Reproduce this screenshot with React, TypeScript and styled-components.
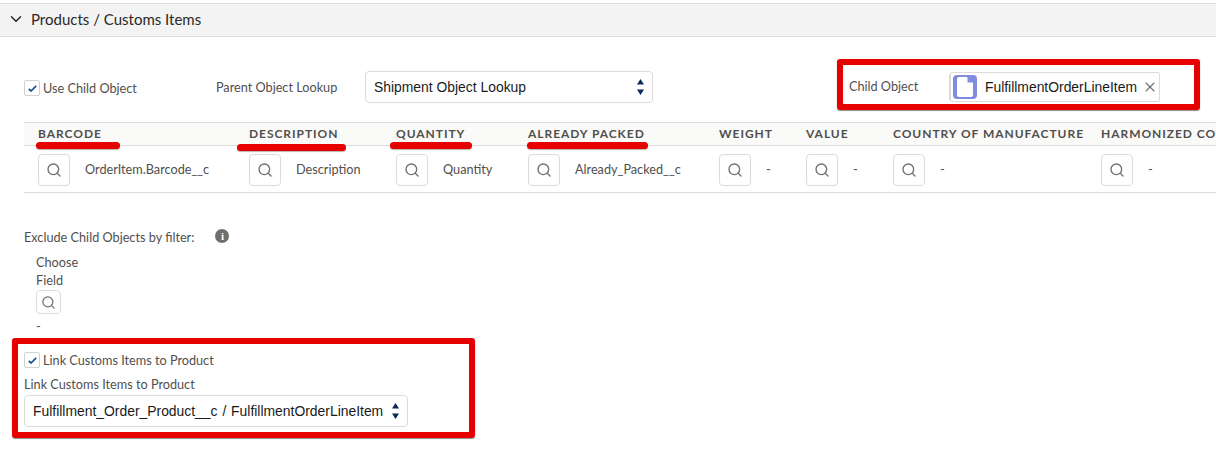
import { memo } from 'react';
import styled, { createGlobalStyle } from 'styled-components';
import { ChevronDown, Search, X } from 'lucide-react';

const GlobalStyle = createGlobalStyle`
  html, body { margin: 0; padding: 0; background: #fff; }
  body { font-family: "Lato", "Liberation Sans", sans-serif; color: #3e3e3c; font-size: 12px; }
`;

const columns = [
  { title: 'Barcode', value: 'OrderItem.Barcode__c', mark: { left: -2, width: 84, top: 19 } },
  { title: 'Description', value: 'Description', mark: { left: -12, width: 109, top: 21 } },
  { title: 'Quantity', value: 'Quantity', mark: { left: -6, width: 82, top: 19 } },
  { title: 'Already Packed', value: 'Already_Packed__c', mark: { left: -1, width: 121, top: 19 } },
  { title: 'Weight', value: '-' },
  { title: 'Value', value: '-' },
  { title: 'Country of Manufacture', value: '-' },
  { title: 'Harmonized Code', value: '-' },
];

const gridColumns = '211px 147px 132px 191px 87px 87px 208px 200px';

function CheckMark() {
  return (
    <svg width="9" height="7" viewBox="0 0 9 7">
      <path d="M0.8 4 L3 6 L8.2 0.8" fill="none" stroke="#1b5297" strokeWidth="1.7" />
    </svg>
  );
}

function Arrows() {
  return (
    <ArrowBox>
      <svg width="7" height="16" viewBox="0 0 7 16">
        <path d="M3.5 0 L7 5.5 H0 Z M0 10.5 H7 L3.5 16 Z" fill="#0a2a5e" />
      </svg>
    </ArrowBox>
  );
}

function FinderButton({ small }: { small?: boolean }) {
  return (
    <Finder $small={small}>
      <Search size={small ? 15 : 16} strokeWidth={2} color="#706e6b" />
    </Finder>
  );
}

function App() {
  return (
    <Page>
      <GlobalStyle />
      <SectionHeader>
        <ChevronDown size={18} strokeWidth={1.8} color="#1c1c1c" />
        <SectionTitle>Products / Customs Items</SectionTitle>
      </SectionHeader>

      <TopRow>
        <CheckLabel>
          <CheckBox>
            <CheckMark />
          </CheckBox>
          Use Child Object
        </CheckLabel>
        <LookupLabel>Parent Object Lookup</LookupLabel>
        <SelectBox $width={288}>
          Shipment Object Lookup
          <Arrows />
        </SelectBox>
        <ChildHighlight>
          <ChildLabel>Child Object</ChildLabel>
          <Pill>
            <DocIcon>
              <svg width="16" height="20" viewBox="0 0 16 20">
                <path d="M2 0 H10 L16 6 V18 a2 2 0 0 1 -2 2 H2 a2 2 0 0 1 -2 -2 V2 a2 2 0 0 1 2 -2 Z" fill="#fff" />
                <path d="M10.5 0 V5.5 H16 Z" fill="#7f8de1" />
              </svg>
            </DocIcon>
            <PillText>FulfillmentOrderLineItem</PillText>
            <X size={16} strokeWidth={1.6} color="#706e6b" />
          </Pill>
        </ChildHighlight>
      </TopRow>

      <TableWrap>
        <HeadRow>
          {columns.map((c) => (
            <HeadCell key={c.title}>
              {c.title}
              {c.mark && <RedMark $left={c.mark.left} $width={c.mark.width} $top={c.mark.top} />}
            </HeadCell>
          ))}
        </HeadRow>
        <BodyRow>
          {columns.map((c) => (
            <BodyCell key={c.title}>
              <FinderButton />
              <CellValue>{c.value}</CellValue>
            </BodyCell>
          ))}
        </BodyRow>
      </TableWrap>

      <FilterTitle>
        Exclude Child Objects by filter:
        <InfoIcon>i</InfoIcon>
      </FilterTitle>
      <FilterField>
        <FieldName>Choose Field</FieldName>
        <FinderButton small />
        <FieldDash>-</FieldDash>
      </FilterField>

      <LinkHighlight>
        <CheckLabel>
          <CheckBox>
            <CheckMark />
          </CheckBox>
          Link Customs Items to Product
        </CheckLabel>
        <LinkLabel>Link Customs Items to Product</LinkLabel>
        <SelectBox $width={384}>
          <span>
            Fulfillment_Order_Product__c <Slash>/</Slash> FulfillmentOrderLineItem
          </span>
          <Arrows />
        </SelectBox>
      </LinkHighlight>
    </Page>
  );
}

const Page = styled.div`
  width: 1216px;
  height: 451px;
  overflow: hidden;
  background: #fff;
  padding-top: 3px;
  box-sizing: border-box;
`;

const SectionHeader = styled.div`
  height: 34px;
  box-sizing: border-box;
  display: flex;
  align-items: center;
  gap: 6px;
  padding-left: 7px;
  padding-bottom: 2px;
  background: #f3f3f3;
  border-top: 1px solid #dddbda;
  border-bottom: 1px solid #dddbda;
`;

const SectionTitle = styled.span`
  font-size: 15px;
  color: #2b2826;
`;

const TopRow = styled.div`
  position: relative;
  height: 85px;
  box-sizing: border-box;
  display: flex;
  align-items: flex-start;
  padding: 34px 0 0 24px;
`;

const CheckLabel = styled.label`
  display: flex;
  align-items: center;
  gap: 3px;
  height: 34px;
  font-size: 12.7px;
  color: #514f4d;
`;

const CheckBox = styled.span`
  width: 14px;
  height: 14px;
  border: 1px solid #d4d2d0;
  border-radius: 2px;
  background: #fff;
  display: flex;
  align-items: center;
  justify-content: center;
`;

const LookupLabel = styled.span`
  margin-left: 79px;
  width: 149px;
  line-height: 33px;
  font-size: 12.7px;
  color: #514f4d;
`;

const SelectBox = styled.div<{ $width: number }>`
  position: relative;
  width: ${(p) => p.$width}px;
  height: 32px;
  box-sizing: border-box;
  border: 1px solid #dddbda;
  border-radius: 4px;
  background: #fff;
  display: flex;
  align-items: center;
  padding-left: 8px;
  font-family: "Liberation Sans", sans-serif;
  font-size: 13.9px;
  color: #1a1a1a;
  white-space: nowrap;
`;

const Slash = styled.span`
  margin: 0 1px;
`;

const ArrowBox = styled.span`
  position: absolute;
  right: 8px;
  top: 7px;
  display: flex;
`;

// red annotation frames drawn on the screenshot
const ChildHighlight = styled.div`
  margin-left: 184px;
  margin-top: -12px;
  width: 363px;
  height: 51px;
  box-sizing: border-box;
  border: 6px solid #e60000;
  border-radius: 3px;
  box-shadow: 0 1px 1px rgba(0, 0, 0, 0.45);
  display: flex;
  align-items: center;
  padding-left: 6px;
`;

const ChildLabel = styled.span`
  width: 101px;
  flex: none;
  margin-top: 2px;
  font-size: 12.7px;
  color: #514f4d;
`;

const Pill = styled.div`
  height: 30px;
  width: 210px;
  flex: none;
  margin-top: 5px;
  box-sizing: border-box;
  border: 1px solid #dddbda;
  border-radius: 2px;
  display: flex;
  align-items: center;
  padding-left: 2px;
  gap: 8px;
  box-shadow: -3px 0 0 -2px #dddbda;
`;

const DocIcon = styled.span`
  width: 24px;
  height: 24px;
  flex: none;
  border-radius: 4px;
  background: #7f8de1;
  display: flex;
  align-items: center;
  justify-content: center;
`;

const PillText = styled.span`
  font-family: "Liberation Sans", sans-serif;
  font-size: 13.9px;
  color: #1a1a1a;
  margin-right: -3px;
`;

const TableWrap = styled.div`
  margin-left: 24px;
  overflow: hidden;
`;

const HeadRow = styled.div`
  display: grid;
  grid-template-columns: ${gridColumns};
  height: 24px;
  box-sizing: border-box;
  padding-left: 14px;
  background: #fafaf9;
  border-top: 1px solid #dddbda;
  border-bottom: 1px solid #dddbda;
  width: 1300px;
`;

const HeadCell = styled.div`
  position: relative;
  font-size: 12px;
  font-weight: 700;
  letter-spacing: 0.95px;
  line-height: 22px;
  text-transform: uppercase;
  color: #514f4d;
  white-space: nowrap;
`;

const RedMark = styled.span<{ $left: number; $width: number; $top: number }>`
  position: absolute;
  left: ${(p) => p.$left}px;
  top: ${(p) => p.$top}px;
  width: ${(p) => p.$width}px;
  height: 7px;
  border-radius: 4px;
  background: #e60000;
  box-shadow: 0 1px 1px rgba(0, 0, 0, 0.3);
`;

const BodyRow = styled.div`
  display: grid;
  grid-template-columns: ${gridColumns};
  height: 47px;
  box-sizing: border-box;
  padding-left: 14px;
  padding-top: 8px;
  border-bottom: 1px solid #dddbda;
  width: 1300px;
`;

const BodyCell = styled.div`
  display: flex;
  align-items: flex-start;
  gap: 15px;
`;

const Finder = styled.div<{ $small?: boolean }>`
  width: ${(p) => (p.$small ? 25 : 32)}px;
  height: ${(p) => (p.$small ? 24 : 32)}px;
  box-sizing: border-box;
  flex: none;
  border: 1px solid #dddbda;
  border-radius: 4px;
  background: #fff;
  display: flex;
  align-items: center;
  justify-content: center;
`;

const CellValue = styled.span`
  line-height: 30px;
  font-size: 12.7px;
  color: #514f4d;
  white-space: nowrap;
`;

const FilterTitle = styled.div`
  margin: 35px 0 0 24px;
  height: 18px;
  display: flex;
  align-items: center;
  font-size: 12.7px;
  color: #514f4d;
`;

const InfoIcon = styled.span`
  width: 14px;
  height: 14px;
  margin: -3px 0 0 21px;
  border-radius: 50%;
  background: #706e6b;
  color: #fff;
  font-family: "Liberation Serif", serif;
  font-weight: 700;
  font-size: 11px;
  line-height: 14px;
  text-align: center;
`;

const FilterField = styled.div`
  margin: 7px 0 0 36px;
  width: 60px;
`;

const FieldName = styled.div`
  font-size: 12.7px;
  line-height: 18px;
  margin-bottom: 1px;
  color: #514f4d;
`;

const FieldDash = styled.div`
  font-size: 12.7px;
  line-height: 18px;
  margin-top: 3px;
  color: #514f4d;
`;

const LinkHighlight = styled.div`
  margin: 3px 0 0 12px;
  width: 463px;
  height: 100px;
  box-sizing: border-box;
  border: 6px solid #e60000;
  border-radius: 3px;
  box-shadow: 0 1px 1px rgba(0, 0, 0, 0.45);
  padding: 0 0 0 6px;

  ${CheckLabel} {
    height: 20px;
    margin-top: 6px;
  }
`;

const LinkLabel = styled.div`
  font-size: 12.7px;
  line-height: 18px;
  margin: 5px 0 2px;
  color: #514f4d;
`;

export default memo(App);
